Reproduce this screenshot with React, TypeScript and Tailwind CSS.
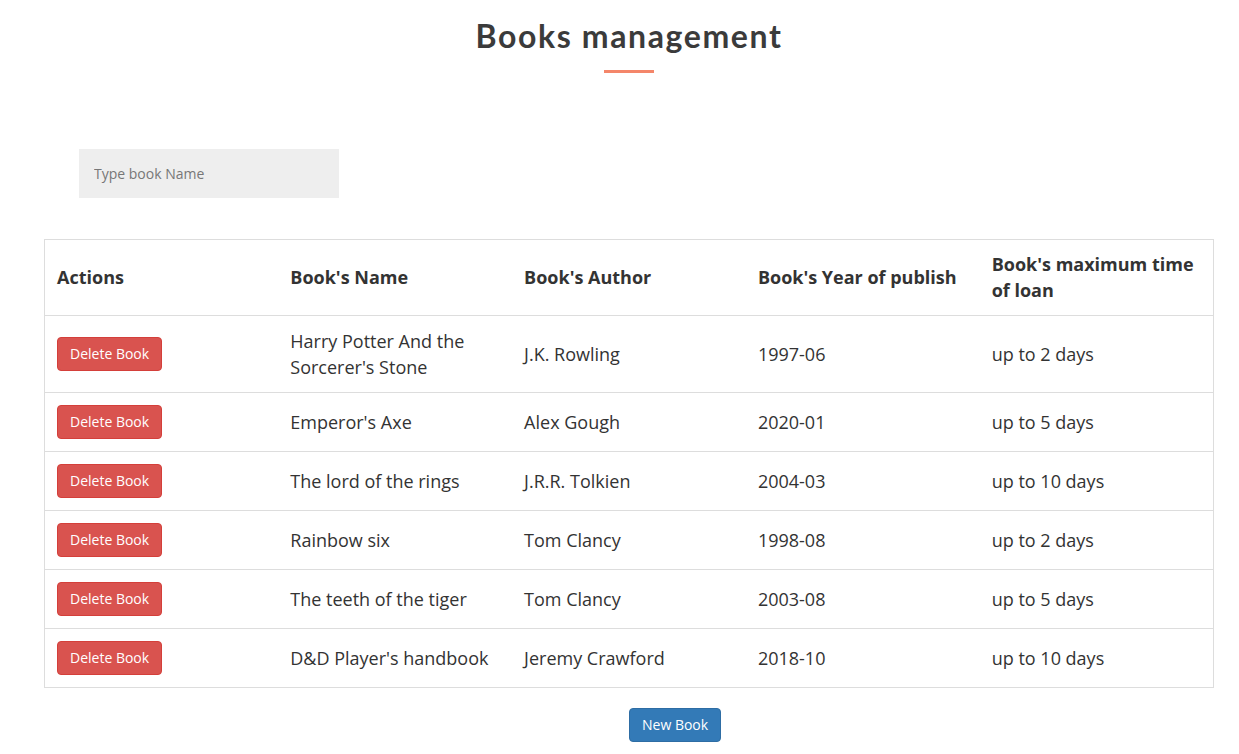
import React from 'react';

const books = [
  { name: "Harry Potter And the Sorcerer's Stone", author: 'J.K. Rowling', year: '1997-06', loan: 'up to 2 days' },
  { name: "Emperor's Axe", author: 'Alex Gough', year: '2020-01', loan: 'up to 5 days' },
  { name: 'The lord of the rings', author: 'J.R.R. Tolkien', year: '2004-03', loan: 'up to 10 days' },
  { name: 'Rainbow six', author: 'Tom Clancy', year: '1998-08', loan: 'up to 2 days' },
  { name: 'The teeth of the tiger', author: 'Tom Clancy', year: '2003-08', loan: 'up to 5 days' },
  { name: "D&D Player's handbook", author: 'Jeremy Crawford', year: '2018-10', loan: 'up to 10 days' },
];

const headers = ['Actions', "Book's Name", "Book's Author", "Book's Year of publish", "Book's maximum time of loan"];

export default function App() {
  return (
    <div className="min-h-screen bg-white text-[#333] font-['Open_Sans',sans-serif]">
      <div className="ml-[44px] w-[1170px]">
        {/* title */}
        <div className="flex flex-col items-center pt-[14px]">
          <h1 className="text-[32px] leading-[44px] font-bold text-[#3b3b3b] font-['Lato',sans-serif] tracking-[1.6px]">
            Books management
          </h1>
          <div className="mt-[12px] h-[3px] w-[50px] bg-[#f4866a]"></div>
        </div>

        {/* search */}
        <div className="pt-[76px] pl-[35px]">
          <input
            type="text"
            placeholder="Type book Name"
            className="h-[49px] w-[260px] bg-[#eeeeee] px-[15px] text-[14px] text-[#555] placeholder:text-[#777] outline-none"
          />
        </div>

        {/* table */}
        <table className="mt-[41px] w-[1170px] table-fixed border-collapse border border-[#dddddd] text-[18px] leading-[26px]">
          <thead>
            <tr>
              {headers.map((h) => (
                <th key={h} className="border-b border-[#dddddd] px-[12px] pt-[11px] pb-[12px] text-left align-middle font-bold">
                  {h}
                </th>
              ))}
            </tr>
          </thead>
          <tbody>
            {books.map((b) => (
              <tr key={b.name} className="border-t border-[#dddddd]">
                <td className="p-[12px] align-middle">
                  <button className="h-[34px] rounded-[4px] border border-[#d43f3a] bg-[#d9534f] px-[12px] text-[14px] leading-[20px] text-white">
                    Delete Book
                  </button>
                </td>
                <td className="p-[12px] align-middle">{b.name}</td>
                <td className="p-[12px] align-middle">{b.author}</td>
                <td className="p-[12px] align-middle">{b.year}</td>
                <td className="p-[12px] align-middle">{b.loan}</td>
              </tr>
            ))}
          </tbody>
        </table>

        {/* new book */}
        <div className="pt-[20px] pl-[585px] pb-[13px]">
          <button className="h-[34px] rounded-[4px] border border-[#2e6da4] bg-[#337ab7] px-[12px] text-[14px] leading-[20px] text-white">
            New Book
          </button>
        </div>
      </div>
    </div>
  );
}
